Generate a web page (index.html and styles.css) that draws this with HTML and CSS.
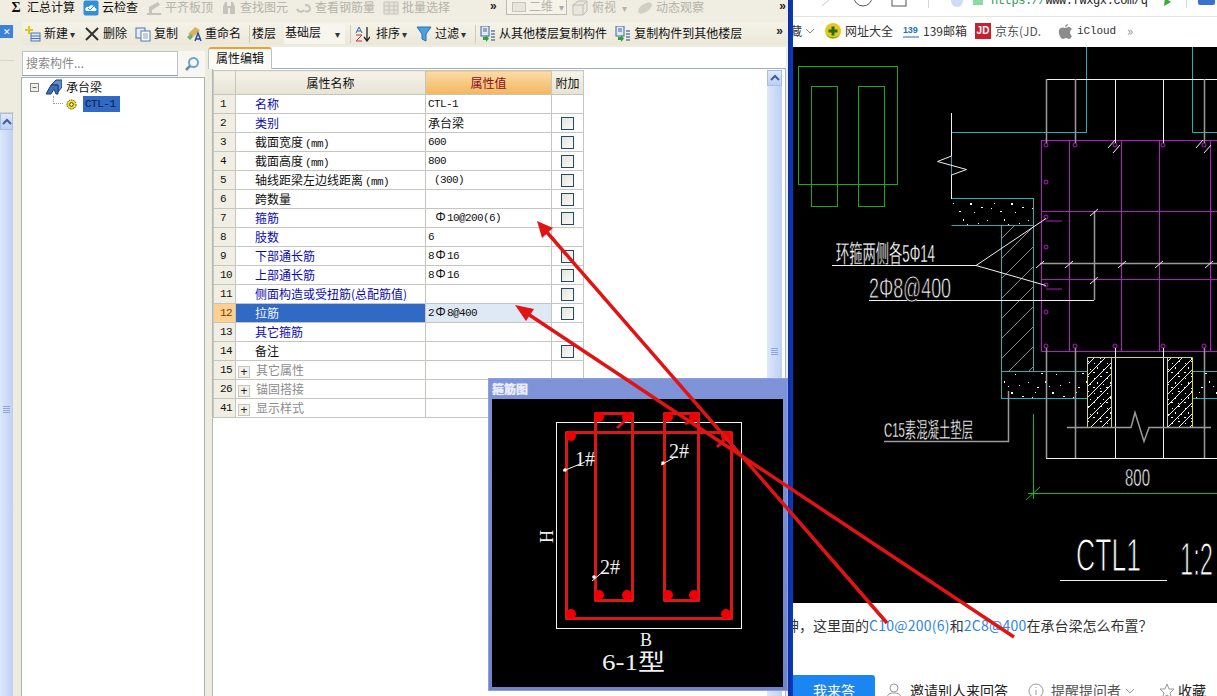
FILE: index.html
```html
<!DOCTYPE html>
<html lang="zh-CN">
<head>
<meta charset="utf-8">
<title>承台梁 属性编辑</title>
<link rel="stylesheet" href="styles.css">
</head>
<body>
<div class="screen">
  <section class="app">
    <div class="bar bar-top">
      <div class="tool"><span class="ico sigma">Σ</span><span>汇总计算</span></div>
      <div class="tool"><svg class="ico" viewBox="0 0 16 16"><rect x="0.5" y="0.5" width="15" height="15" rx="2" fill="#2f8fd8"/><path d="M3 11c-2-3 1-5 3-4 1-3 6-2 6 1 2 0 2 3 0 3z" fill="#fff"/><path d="M5 8l2 2 4-4" stroke="#2f8fd8" fill="none"/></svg><span>云检查</span></div>
      <div class="tool off"><svg class="ico" viewBox="0 0 16 16"><path d="M1 13h14v2H1zM3 7l9-5 2 3-8 5v3H3z" fill="#c4c4bc"/></svg><span>平齐板顶</span></div>
      <div class="tool off"><svg class="ico" viewBox="0 0 16 16"><path d="M2 7l2-5h2v4h4V2h2l2 5v7H9V8H7v6H2z" fill="#c4c4bc"/></svg><span>查找图元</span></div>
      <div class="tool off"><svg class="ico" viewBox="0 0 16 16"><path d="M1 9c2 4 6 3 7 1M9 5c3 0 5 1 5 4s-3 3-5 2" stroke="#c4c4bc" stroke-width="2" fill="none"/></svg><span>查看钢筋量</span></div>
      <div class="tool off"><svg class="ico" viewBox="0 0 16 16"><path d="M1 2h14v12H1zM1 6h14M1 10h14M6 2v12M11 2v12" stroke="#c4c4bc" fill="#e6e4da"/></svg><span>批量选择</span></div>
      <span class="more more-a">»</span>
      <div class="combo-off"><span class="combo-ico"></span><span>二维</span><span class="caret">▾</span></div>
      <div class="tool off tool-cube"><svg class="ico" viewBox="0 0 16 16"><path d="M1 5l5-4h9v10l-4 4H1zM1 5h10v10M11 5l4-4" stroke="#bdbdb4" fill="#e9e7dd"/></svg><span>俯视</span><span class="caret caret-off">▾</span></div>
      <div class="tool off tool-orbit"><svg class="ico" viewBox="0 0 16 16"><ellipse cx="8" cy="8" rx="8" ry="4" transform="rotate(-35 8 8)" fill="#cfcfc6"/></svg><span>动态观察</span></div>
      <span class="more more-b">»</span>
    </div>
    <div class="bar bar-sub">
      <div class="tool"><svg class="ico" viewBox="0 0 16 16"><path d="M3 0h2v3h3v2H5v3H3V5H0V3h3z" fill="#e8c020"/><rect x="6" y="7" width="9" height="8" fill="#dbe7f6" stroke="#4a78b0"/><path d="M6 10h9M6 12.500h9" stroke="#4a78b0"/></svg><span>新建</span><span class="caret">▾</span></div>
      <div class="tool"><svg class="ico" viewBox="0 0 16 16"><path d="M2 2l12 12M14 2L2 14" stroke="#333" stroke-width="2"/></svg><span>删除</span></div>
      <div class="tool"><svg class="ico" viewBox="0 0 16 16"><rect x="1" y="2" width="9" height="10" fill="#e6eefa" stroke="#4f79ac"/><rect x="6" y="5" width="9" height="10" fill="#fff" stroke="#4f79ac"/><path d="M8 8h5M8 10h5M8 12h5" stroke="#7fa0c8"/></svg><span>复制</span></div>
      <div class="tool"><svg class="ico" viewBox="0 0 16 16"><path d="M2 8l7-7 5 3-7 7z" fill="#d9b35c"/><path d="M1 11l4-3 2 3-3 3z" fill="#78a878"/><path d="M9 15l3-8 3 8M10 13h4" stroke="#2a4f9a" stroke-width="1.500" fill="none"/></svg><span>重命名</span></div>
      <span class="sep sep-a"></span>
      <span class="plain">楼层</span>
      <div class="combo"><span>基础层</span><span class="caret">▾</span></div>
      <span class="sep sep-b"></span>
      <div class="tool tool-wide"><svg class="ico" viewBox="0 0 16 16"><path d="M13 1v13M10 11l3 4 3-4" stroke="#222" fill="none" stroke-width="1.300"/><path d="M2 7l3-6 3 6M3 5h4" stroke="#3a6ab0" fill="none"/><path d="M2 9h6l-6 6h6" stroke="#b8324a" fill="none"/></svg><span>排序</span><span class="caret">▾</span></div>
      <div class="tool"><svg class="ico" viewBox="0 0 16 16"><path d="M1 1h14L10 8v7l-4-2V8z" fill="#4aa0e0" stroke="#2a70b0"/></svg><span>过滤</span><span class="caret">▾</span></div>
      <span class="sep sep-c"></span>
      <div class="tool"><svg class="ico" viewBox="0 0 16 16"><rect x="1" y="0" width="8" height="10" fill="#dfe9f7" stroke="#44659a"/><path d="M3 3h4M3 5h4" stroke="#44659a"/><path d="M11 5h4M11 8h4M11 11h4M11 14h4" stroke="#6080a8" stroke-width="1.500"/><path d="M3 11h3v-2l3 3.500L6 16v-2H3z" fill="#30a040"/></svg><span>从其他楼层复制构件</span></div>
      <div class="tool"><svg class="ico" viewBox="0 0 16 16"><rect x="1" y="0" width="8" height="10" fill="#dfe9f7" stroke="#44659a"/><path d="M3 3h4M3 5h4" stroke="#44659a"/><path d="M11 5h4M11 8h4M11 11h4M11 14h4" stroke="#6080a8" stroke-width="1.500"/><path d="M3 11h3v-2l3 3.500L6 16v-2H3z" fill="#30a040"/></svg><span>复制构件到其他楼层</span></div>
      <span class="more more-c">»</span>
    </div>
    <div class="work">
      <aside class="stub">
        <button class="stub-x">✕</button>
        <div class="stub-row"></div>
        <div class="stub-row stub-row-b"></div>
        <div class="stub-up"><svg viewBox="0 0 10 8" class="stub-chev"><path d="M1 6l4-4 4 4" stroke="#3d5f96" stroke-width="2" fill="none"/></svg></div>
        <div class="stub-track"><span class="grip"></span></div>
      </aside>
      <aside class="tree-panel">
        <div class="search"><span class="search-input">搜索构件...</span><span class="search-btn"><svg viewBox="0 0 16 16" class="search-ico"><circle cx="9.500" cy="6.500" r="4.500" fill="none" stroke="#69a7cf" stroke-width="2"/><path d="M6 10l-4 4" stroke="#5b8fb8" stroke-width="2.500"/></svg></span></div>
        <div class="tree">
          <div class="tree-row"><span class="expander">−</span><svg class="beam-ico" viewBox="0 0 16 16"><path d="M5 6l5-5h6v7l-4 5V6z" fill="#5b8fd0" stroke="#1c3c70"/><path d="M0 15l5-9h7v9h-2l-2-5-3 5z" fill="#3f6fb4" stroke="#1c3c70"/></svg><span>承台梁</span></div>
          <div class="tree-row tree-child"><span class="dots"></span><svg class="gear-ico" viewBox="0 0 12 12"><circle cx="6" cy="6" r="5" fill="#f0e020" stroke="#3a3a10" stroke-dasharray="1.500 1"/><circle cx="6" cy="6" r="2" fill="#fffbd0" stroke="#3a3a10"/></svg><span class="selected">CTL-1</span></div>
        </div>
      </aside>
      <main class="props">
        <div class="tab-strip"><div class="tab">属性编辑</div></div>
        <div class="sheet">
          <table class="grid">
            <colgroup><col class="c-no"><col class="c-name"><col class="c-val"><col class="c-add"></colgroup>
            <thead><tr><th class="no"></th><th>属性名称</th><th class="val-h">属性值</th><th>附加</th></tr></thead>
            <tbody>
              <tr><td class="no">1</td><td class="nm link">名称</td><td class="vl">CTL-1</td><td></td></tr>
              <tr><td class="no">2</td><td class="nm link">类别</td><td class="vl cjk">承台梁</td><td class="ck"><span class="box"></span></td></tr>
              <tr><td class="no">3</td><td class="nm">截面宽度<span class="unit">(mm)</span></td><td class="vl">600</td><td class="ck"><span class="box"></span></td></tr>
              <tr><td class="no">4</td><td class="nm">截面高度<span class="unit">(mm)</span></td><td class="vl">800</td><td class="ck"><span class="box"></span></td></tr>
              <tr><td class="no">5</td><td class="nm">轴线距梁左边线距离<span class="unit">(mm)</span></td><td class="vl">&nbsp;(300)</td><td class="ck"><span class="box"></span></td></tr>
              <tr><td class="no">6</td><td class="nm">跨数量</td><td class="vl"></td><td class="ck"><span class="box"></span></td></tr>
              <tr><td class="no">7</td><td class="nm link">箍筋</td><td class="vl">&nbsp;<span class="rb">Φ</span>10@200(6)</td><td class="ck"><span class="box"></span></td></tr>
              <tr><td class="no">8</td><td class="nm link">肢数</td><td class="vl">6</td><td></td></tr>
              <tr><td class="no">9</td><td class="nm link">下部通长筋</td><td class="vl">8<span class="rb">Φ</span>16</td><td class="ck"><span class="box"></span></td></tr>
              <tr><td class="no">10</td><td class="nm link">上部通长筋</td><td class="vl">8<span class="rb">Φ</span>16</td><td class="ck"><span class="box"></span></td></tr>
              <tr><td class="no">11</td><td class="nm link">侧面构造或受扭筋(总配筋值)</td><td class="vl"></td><td class="ck"><span class="box"></span></td></tr>
              <tr class="current"><td class="no">12</td><td class="nm">拉筋</td><td class="vl">2<span class="rb">Φ</span>8@400</td><td class="ck"><span class="box"></span></td></tr>
              <tr><td class="no">13</td><td class="nm link">其它箍筋</td><td class="vl"></td><td></td></tr>
              <tr><td class="no">14</td><td class="nm">备注</td><td class="vl"></td><td class="ck"><span class="box"></span></td></tr>
              <tr><td class="no">15</td><td class="nm group"><span class="plus">+</span>其它属性</td><td class="vl"></td><td></td></tr>
              <tr><td class="no">26</td><td class="nm group"><span class="plus">+</span>锚固搭接</td><td class="vl"></td><td></td></tr>
              <tr><td class="no">41</td><td class="nm group"><span class="plus">+</span>显示样式</td><td class="vl"></td><td></td></tr>
            </tbody>
          </table>
          <div class="vscroll"><div class="vs-up"><svg viewBox="0 0 10 8" class="stub-chev"><path d="M1 6l4-4 4 4" stroke="#3d5f96" stroke-width="2" fill="none"/></svg></div><div class="vs-track"><span class="grip grip-v"></span></div></div>
        </div>
      </main>
    </div>
  </section>
  <div class="divider"></div>
  <section class="browser">
    <div class="nav-row">
      <svg class="nav-svg" viewBox="793 0 424 16"><path d="M822 6l9-8" stroke="#c4c4c4" fill="none"/><circle cx="863" cy="-3" r="9" stroke="#555" fill="none"/><rect x="892" y="-6" width="14" height="12" stroke="#555" fill="none"/><path d="M928.500 0v8M1186.500 0v8" stroke="#d8d8d8"/><circle cx="957" cy="1" r="6" fill="#cfdcf5"/><rect x="973" y="-3" width="10" height="8" fill="#8fd8a8"/><text x="991" y="4" class="url"><tspan class="url-s">https://</tspan>www.fwxgx.com/q</text><path d="M1165 -2l6 4-7 4z" fill="#3aa83a"/><rect x="1198" y="-3" width="17" height="8" rx="2" fill="#3a70d0"/></svg>
    </div>
    <div class="bookmarks">
      <span class="bm-clip">藏</span>
      <svg class="bm-chev" viewBox="0 0 10 6"><path d="M1 1l4 4 4-4" stroke="#888" fill="none"/></svg>
      <div class="bm"><svg class="bm-ico" viewBox="0 0 16 16"><circle cx="8" cy="8" r="8" fill="#e8c820"/><path d="M1 11a8 8 0 0 0 14 0 9 9 0 0 1-14 0z" fill="#3c9a28"/><path d="M6.500 3.500h3v3h3v3h-3v3h-3v-3h-3v-3h3z" fill="#2a6a18"/></svg><span>网址大全</span></div>
      <div class="bm bm-mail"><span class="n139">139</span><span>139邮箱</span></div>
      <div class="bm bm-jd"><span class="jd">JD</span><span class="fade">京东(JD.</span></div>
      <div class="bm bm-apple"><svg class="bm-ico" viewBox="0 0 16 16"><path d="M11 1c0 2-2 3-3 3 0-2 2-3 3-3zM8 5c1 0 2-1 4-1 1 0 2 1 3 2-3 2-2 6 0 7-1 2-2 3-3 3s-2-1-3-1-2 1-3 1c-2 0-5-5-4-9 1-3 5-3 6-2z" fill="#8c8c8c"/></svg><span class="icloud">iCloud</span></div>
      <span class="bm-more">»</span>
    </div>
    <div class="drawing">
      <svg class="cad" viewBox="793 47 424 556">
        <defs>
          <pattern id="hatch" patternUnits="userSpaceOnUse" width="20" height="20"><path d="M0 20L20 0" class="c-grey"/></pattern>
          <pattern id="dense" patternUnits="userSpaceOnUse" width="11" height="11"><path d="M0 11L11 0" class="c-white"/></pattern>
          <pattern id="speck" patternUnits="userSpaceOnUse" width="41" height="27"><path d="M3 4h1v1H3zM12 9h2v1h-2zM20 3h1v2h-1zM27 14h2v2h-2zM35 7h1v1h-1zM7 19h1v1H7zM16 22h2v1h-2zM31 23h1v1h-1zM24 8h1v1h-1zM38 18h2v1h-2zM10 14h1v1h-1z" fill="#fff"/></pattern>
          <pattern id="speck-fine" patternUnits="userSpaceOnUse" width="13" height="15"><path d="M2 3h1v1H2zM8 1h2v1H8zM5 7h1v2H5zM11 9h1v1h-1zM1 12h2v1H1zM8 13h1v1H8z" fill="#fff"/></pattern>
        </defs>
        <g class="c-green"><rect x="798.500" y="66.500" width="99" height="118"/><rect x="811.500" y="86.500" width="26" height="120"/><rect x="858.500" y="86.500" width="26" height="120"/></g>
        <rect class="fill-hatch" x="1001" y="225" width="32" height="146"/>
        <rect class="fill-speck" x="951" y="198" width="82" height="27"/>
        <rect class="fill-speck" x="1001" y="371" width="86" height="27"/>
        <rect class="fill-speck" x="1192" y="371" width="25" height="27"/>
        <rect class="fill-dense" x="1087" y="357" width="24" height="70"/>
        <rect class="fill-fine" x="1087" y="357" width="24" height="70"/>
        <rect class="fill-dense" x="1167" y="357" width="25" height="70"/>
        <rect class="fill-fine" x="1167" y="357" width="25" height="70"/>
        <path class="c-cyan" d="M1086.500 47v85.500H951.500v66M1192.500 47v85.500H1217M951.500 198.500h82v27h-82M1001.500 225v173.500M1033.500 198v173M1001 371.500h86M1001 398.500h86M1192 371.500h25M1192 398.500h25"/>
        <path class="c-magenta" d="M1041.500 140.500H1217M1041.500 140v211.500H1217M1069.500 140v211M1121.500 140v211M1159.500 140v211M1210.500 140v211M1041 211.500h176M1041 279.500h176"/>
        <g class="c-magenta-dot"><circle cx="1046" cy="145" r="2"/><circle cx="1075" cy="145" r="2"/><circle cx="1115" cy="145" r="2"/><circle cx="1163" cy="145" r="2"/><circle cx="1204" cy="145" r="2"/><circle cx="1046" cy="182" r="2"/><circle cx="1046" cy="217" r="2"/><circle cx="1046" cy="247" r="2"/><circle cx="1046" cy="285" r="2"/><circle cx="1046" cy="312" r="2"/><circle cx="1046" cy="346" r="2"/><circle cx="1075" cy="346" r="2"/><circle cx="1115" cy="346" r="2"/><circle cx="1163" cy="346" r="2"/><circle cx="1204" cy="346" r="2"/></g>
        <path class="c-white" d="M1046.500 79.500H1217M1115.500 79v64M1163.500 79v64M1115.500 348v110M1163.500 348v110M1046 458.500h171M951.500 113v43l-14 5.500 29 8-15 5.500v24M832 265.500h144l70-47M976 265.500l70 20M869 300.500h225"/>
        <path class="c-grey-w" d="M1046.500 79v64M1075.500 79v64M1204.500 79v64M1046.500 348v110M1075.500 348v110M1204.500 348v110M1040 263.500h177M1094.500 211v89M884 441.500h124.500V391M1067 427.500h64l4-15 9 29 5-14h62"/>
        <path class="c-white" d="M1036 268l8-7M1065 268l8-7M1118 268l8-7M1155 268l8-7M1205 268l8-7M1090 216l8-7M1090 284l8-7M1108 148l7-8M1113 153l7-8M1196 148l7-8M1204 153l7-8"/>
        <path class="c-magenta" d="M1046 221h16M1046 289h16"/>
        <path class="c-yellow" d="M1087.500 427V357.500H1192.500V427M1111.500 357v70M1167.500 357v70"/>
        <path class="c-lime" d="M1033.500 414v85M1028 493.500h189M1026 500l14-13"/>
        <path class="c-white" d="M1060 580.500h107"/>
        <g class="cad-text">
          <text x="836" y="262" class="t22" textLength="99" lengthAdjust="spacingAndGlyphs">环箍两侧各5Φ14</text>
          <text x="869" y="298" class="t26" textLength="82" lengthAdjust="spacingAndGlyphs">2Φ8@400</text>
          <text x="884" y="437" class="t20" textLength="89" lengthAdjust="spacingAndGlyphs">C15素混凝土垫层</text>
          <text x="1125" y="486" class="t24" textLength="25" lengthAdjust="spacingAndGlyphs">800</text>
          <text x="1076" y="571" class="t44" textLength="65" lengthAdjust="spacingAndGlyphs">CTL1</text>
          <text x="1180" y="575" class="t44" textLength="33" lengthAdjust="spacingAndGlyphs">1:2</text>
        </g>
      </svg>
    </div>
    <p class="question">神，这里面的<span class="hl">C10@200(6)</span>和<span class="hl">2C8@400</span>在承台梁怎么布置？</p>
    <div class="actions">
      <button class="answer">我来答</button>
      <svg class="act-ico act-person" viewBox="0 0 16 16"><circle cx="8" cy="5" r="4" fill="none" stroke="#999"/><path d="M1 16c0-5 3-6 7-6s7 1 7 6" fill="none" stroke="#999"/></svg>
      <span class="act act-invite">邀请别人来回答</span>
      <svg class="act-ico act-info" viewBox="0 0 16 16"><circle cx="8" cy="8" r="7" fill="none" stroke="#999"/><path d="M8 4v1M8 7v5" stroke="#999"/></svg>
      <span class="act act-muted">提醒提问者</span>
      <svg class="act-ico act-chev" viewBox="0 0 10 6"><path d="M1 1l4 4 4-4" stroke="#999" fill="none"/></svg>
      <svg class="act-ico act-star" viewBox="0 0 16 16"><path d="M8 1l2 5h5l-4 4 1.500 5L8 12l-4.500 3L5 10 1 6h5z" fill="none" stroke="#999"/></svg>
      <span class="act">收藏</span>
    </div>
  </section>

  <div class="dialog">
    <div class="dialog-title">箍筋图</div>
    <svg class="dialog-body" viewBox="492 399 291 288">
      <rect class="d-white" x="556.500" y="422.500" width="185" height="206"/>
      <g class="d-red">
        <rect x="566.500" y="432.500" width="165" height="186"/>
        <rect x="595.500" y="413.500" width="37" height="187"/>
        <rect x="664.500" y="413.500" width="34" height="187"/>
        <path d="M631 415l-14 13M698 417l-13 7M731 433l-14 14"/>
      </g>
      <g class="d-dot">
        <circle cx="571" cy="436" r="5"/><circle cx="726" cy="436" r="5"/><circle cx="571" cy="614" r="5"/><circle cx="726" cy="614" r="5"/>
        <circle cx="599" cy="417" r="5"/><circle cx="627" cy="417" r="5"/><circle cx="599" cy="595" r="5"/><circle cx="627" cy="595" r="5"/>
        <circle cx="668" cy="417" r="5"/><circle cx="694" cy="417" r="5"/><circle cx="668" cy="595" r="5"/><circle cx="694" cy="595" r="5"/>
      </g>
      <path class="d-white" d="M563 471l22-9M661 465l14-8M592 581l13-11"/>
      <g class="d-pin"><circle cx="565" cy="470" r="1.800"/><circle cx="663" cy="463" r="1.800"/><circle cx="594" cy="577" r="1.800"/></g>
      <g class="d-text">
        <text x="575" y="466" class="d20">1#</text>
        <text x="669" y="458" class="d20">2#</text>
        <text x="600" y="574" class="d20">2#</text>
        <text x="640" y="646" class="d18">B</text>
        <text x="553" y="543" class="d18" transform="rotate(-90 553 543)">H</text>
        <text x="602" y="670" class="d27" textLength="63" lengthAdjust="spacingAndGlyphs">6-1型</text>
      </g>
    </svg>
  </div>

  <svg class="arrows" viewBox="0 0 1217 696">
    <path d="M887 623L545 230M1014 637L528 314"/>
    <polygon points="537,221 553,228 542,238"/>
    <polygon points="515,305 534,309 526,321"/>
  </svg>
</div>
</body>
</html>
```
FILE: styles.css
```css
* { box-sizing: border-box; }
html, body { margin: 0; padding: 0; width: 1217px; height: 696px; overflow: hidden; background: #fff; }
body { font: 12px/1.2 "Noto Sans CJK SC", "Liberation Sans", sans-serif; color: #111; }
button { font: inherit; border: 0; padding: 0; }

.screen { position: relative; display: flex; width: 1217px; height: 696px; overflow: hidden; }

/* Application window */
.app { width: 788px; height: 696px; display: flex; flex-direction: column; background: #eeebdf; overflow: hidden; }
.bar { display: flex; align-items: center; gap: 8px; white-space: nowrap; flex: none; }
.bar-top { height: 22px; padding: 0 0 7px 8px; background: #f0ede2; }
.bar-sub { height: 23px; margin-left: 22px; padding-left: 3px; background: linear-gradient(#f5f2e8, #ebe8da); border-radius: 3px 0 0 3px; }
.tool { display: flex; align-items: center; gap: 3px; }
.ico { width: 16px; height: 16px; flex: none; }
.sigma { font: bold 14px/16px "Liberation Serif", serif; text-align: center; }
.off { color: #b4b3a9; }
.caret { font-size: 10px; margin-left: -1px; width: 6px; color: #333; }
.caret-off { color: #b4b3a9; margin-left: 3px; }
.more { font: bold 12px/12px "Liberation Sans", sans-serif; color: #222; width: 8px; }
.more-a { margin-left: 32px; margin-top: -4px; }
.more-b { margin-left: 67px; margin-top: -4px; }
.more-c { margin-left: 26px; margin-top: -6px; }
.combo-off { display: flex; align-items: center; gap: 3px; width: 61px; height: 17px; align-self: flex-start; margin-top: -2px; padding-left: 5px; border: 1px solid #bdbcb2; color: #b4b3a9; background: #f4f2e9; }
.combo-off .caret { margin-left: 3px; color: #aaa; }
.combo-ico { width: 14px; height: 10px; border: 1px solid #c6c5bb; background: #e8e6dc; }
.tool-cube { margin-left: -3px; }
.tool-cube .ico { margin-right: 1px; }
.tool-orbit { margin-left: 1px; }
.sep { width: 1px; height: 18px; background: #cfccbd; flex: none; }
.sep-a { margin-right: -6px; }
.sep-b { margin-left: -3px; margin-right: -5px; }
.sep-c { margin-right: -4px; }
.plain { flex: none; }
.combo { display: flex; justify-content: space-between; align-items: center; width: 61px; height: 20px; padding: 0 4px 0 1px; background: #f7f5ee; }
.combo span:first-child { margin-top: -2px; }
.tool-wide .ico { margin-right: 3px; }

.work { flex: 1; min-height: 0; display: flex; }

/* Cut-off left pane */
.stub { width: 14px; flex: none; display: flex; flex-direction: column; margin-top: -20px; position: relative; }
.stub-x { width: 13px; height: 13px; background: #3b82d8; color: #fff; font-size: 9px; line-height: 13px; text-align: center; flex: none; }
.stub-row { height: 23px; border-bottom: 1px solid #d8d5c6; background: #eeebdf; flex: none; }
.stub-row-b { height: 52px; }
.stub-up { width: 13px; height: 17px; background: linear-gradient(#e0e9fb, #bccff2); border: 1px solid #a7bde6; display: flex; align-items: center; justify-content: center; flex: none; }
.stub-chev { width: 10px; height: 8px; }
.stub-track { flex: 1; width: 13px; background: linear-gradient(90deg, #dce7fb, #bed0f3); display: flex; align-items: center; justify-content: center; }
.grip { width: 7px; height: 7px; background: repeating-linear-gradient(#8ea8d8 0 1px, transparent 1px 2px); margin-top: -8px; }

/* Tree */
.tree-panel { width: 183px; flex: none; margin-left: 8px; display: flex; flex-direction: column; padding-top: 6px; }
.search { display: flex; height: 26px; flex: none; background: #f7f6f0; }
.search-input { width: 156px; height: 25px; line-height: 22px; padding-left: 3px; background: #fff; border: 1px solid #b9c4cc; border-bottom-color: #8fa0ae; color: #888; }
.search-btn { flex: 1; display: flex; align-items: center; justify-content: center; }
.search-ico { width: 16px; height: 16px; }
.tree { flex: 1; background: #fff; border: 1px solid #a8b2b8; border-bottom: 0; padding: 0 0 0 8px; margin-left: -1px; }
.tree-row { display: flex; align-items: center; height: 18px; font-size: 12px; }
.expander { width: 9px; height: 9px; border: 1px solid #888; background: #eee; font: 8px/7px "Liberation Sans", sans-serif; text-align: center; margin-right: 7px; }
.beam-ico { width: 16px; height: 16px; margin-right: 4px; }
.tree-child { height: 16px; padding-left: 23px; }
.dots { width: 10px; height: 8px; margin-top: -8px; border-left: 1px dotted #999; border-bottom: 1px dotted #999; margin-right: 3px; flex: none; }
.gear-ico { width: 11px; height: 11px; margin-right: 6px; flex: none; }
.selected { background: #316ac5; color: #0c1a40; font: 11px/16px "Liberation Mono", monospace; letter-spacing: -0.5px; width: 37px; height: 16px; padding-left: 2px; flex: none; }

/* Property sheet */
.props { width: 578px; flex: none; margin-left: 3px; display: flex; flex-direction: column; margin-top: 2px; }
.tab-strip { height: 22px; flex: none; background: #fff; border-bottom: 1px solid #9fb0bb; }
.tab { width: 64px; height: 22px; line-height: 18px; padding-left: 7px; background: #fbfbf6; border: 1px solid #b8c3c8; border-top: 2px solid #f0a030; border-bottom: 0; border-radius: 3px 3px 0 0; }
.sheet { flex: 1; min-height: 0; background: #fff; border-left: 1px solid #b0b8ba; border-right: 1px solid #b0b8ba; margin-left: 4px; padding: 1px 3px 0 0; display: flex; justify-content: space-between; }
.grid { border-collapse: collapse; table-layout: fixed; width: 370px; height: 347px; align-self: flex-start; }
.c-no { width: 22px; }
.c-name { width: 190px; }
.c-val { width: 126px; }
.c-add { width: 32px; }
.grid th, .grid td { border: 1px solid #c6c6c0; padding: 0; height: 19px; line-height: 16px; font-weight: normal; overflow: hidden; white-space: nowrap; }
.grid th { height: 24px; background: linear-gradient(#f6f3ea, #e7e3d4); text-align: center; }
.grid th.val-h { background: linear-gradient(#fbdba6, #f2b75f); color: #8a0d24; }
.grid td.no { background: #f1eee3; padding-left: 6px; font: 11px/16px "Liberation Mono", monospace; letter-spacing: -0.6px; }
.nm { padding-left: 19px !important; }
.link { color: #0b0bb0; }
.group { color: #8c8c8c; padding-left: 2px !important; }
.plus { display: inline-block; width: 12px; height: 12px; margin-right: 6px; border: 1px solid #c9c6b8; background: #f1f0ea; color: #222; font: 12px/10px "Liberation Sans", sans-serif; text-align: center; vertical-align: -1px; }
.unit { font: 11px/12px "Liberation Mono", monospace; letter-spacing: -0.6px; margin-left: 2px; }
.grid td.vl { padding-left: 2px; font: 11px/16px "Liberation Mono", "Noto Sans CJK SC", monospace; letter-spacing: -0.6px; }
.grid td.vl.cjk { font: 12px/16px "Noto Sans CJK SC", sans-serif; letter-spacing: 0; }
.rb { display: inline-block; width: 13px; height: 12px; text-align: center; font: 12px/12px "Noto Sans", sans-serif; letter-spacing: 0; vertical-align: baseline; }
.ck { text-align: center; }
.box { display: block; width: 13px; height: 13px; margin: 0 auto; border: 1px solid #25486e; background: linear-gradient(135deg, #e4e4dc, #fbfbf8); }
.current .no { background: #fdd08f !important; color: #7a3a00; }
.current .nm { background: #316ac5; color: #f2f4fa; }
.current .vl { background: #dfe8f5; }
.vscroll { width: 15px; height: 100%; flex: none; display: flex; flex-direction: column; }
.vs-up { height: 16px; background: linear-gradient(#e0e9fb, #bccff2); border: 1px solid #a7bde6; display: flex; align-items: center; justify-content: center; flex: none; }
.vs-track { flex: 1; background: linear-gradient(90deg, #dce7fb, #bed0f3); padding-top: 262px; display: flex; justify-content: center; align-items: flex-start; }
.grip-v { margin: 0; }

/* Divider between the two windows */
.divider { width: 5px; flex: none; background: linear-gradient(90deg, #0b2f9c, #0a3bc4); }

/* Browser */
.browser { width: 424px; flex: none; display: flex; flex-direction: column; background: #fff; overflow: hidden; }
.nav-row { height: 17px; flex: none; border-bottom: 1px solid #e4e4e4; }
.nav-svg { display: block; width: 424px; height: 16px; }
.url { font: 12px "Liberation Mono", monospace; fill: #222; letter-spacing: -0.4px; }
.url-s { fill: #2a9a5a; }
.bookmarks { height: 30px; flex: none; display: flex; align-items: center; white-space: nowrap; color: #333; padding-bottom: 2px; }
.bm-clip { width: 9px; overflow: hidden; direction: rtl; }
.bm-chev { width: 10px; height: 6px; margin-left: 3px; }
.bm { display: flex; align-items: center; gap: 4px; }
.bookmarks > .bm-chev + .bm { margin-left: 10px; }
.bm-ico { width: 16px; height: 16px; }
.bm-mail { margin-left: 10px; }
.n139 { width: 16px; font: bold 9px/12px "Liberation Sans", sans-serif; color: #2a70b8; border-bottom: 2px solid #8cb4dc; letter-spacing: -0.2px; }
.bm-jd { margin-left: 8px; }
.jd { width: 16px; height: 16px; background: #c8202f; color: #fff; font: bold 10px/16px "Liberation Sans", sans-serif; text-align: center; }
.fade { width: 50px; overflow: hidden; color: #555; }
.bm-apple { margin-left: 12px; gap: 2px; }
.icloud { font: 11px "Liberation Mono", monospace; letter-spacing: -0.1px; margin-left: 2px; }
.bm-more { margin-left: 11px; color: #999; font-size: 13px; }
.drawing { height: 556px; flex: none; background: #000; }
.cad { display: block; width: 424px; height: 556px; }
.c-green path, .c-green rect { fill: none; stroke: #1ea81e; }
.c-cyan { fill: none; stroke: #2ab0b4; }
.c-magenta { fill: none; stroke: #b818c8; }
.c-magenta-dot circle { fill: none; stroke: #b818c8; }
.c-white { fill: none; stroke: #f0f0f0; }
.c-grey { fill: none; stroke: #8a8a8a; }
.c-grey-w { fill: none; stroke: #9a9a9a; stroke-width: 1.500; }
.c-yellow { fill: none; stroke: #d8d83a; }
.c-lime { fill: none; stroke: #10c010; }
.fill-hatch { fill: url(#hatch); }
.fill-speck { fill: url(#speck); }
.fill-fine { fill: url(#speck-fine); }
.fill-dense { fill: url(#dense); }
.cad-text text { fill: #fff; stroke: #000; font-family: "Liberation Sans", "Noto Sans CJK SC", sans-serif; }
.t20 { font-size: 21px; stroke-width: 0.3; }
.t22 { font-size: 24px; stroke-width: 0.3; }
.t24 { font-size: 24px; stroke-width: 0.6; }
.t26 { font-size: 29px; stroke-width: 0.8; }
.t44 { font-size: 46px; stroke-width: 1.2; }
.question { margin: 0 0 0 -8px; height: 72px; flex: none; padding-top: 12px; font-size: 14px; line-height: 20px; color: #333; white-space: nowrap; }
.hl { color: #2f86e0; letter-spacing: 0.25px; }
.actions { display: flex; align-items: flex-start; flex: none; height: 21px; white-space: nowrap; font-size: 14px; }
.answer { width: 82px; height: 30px; background: #1b86f2; color: #fff; border-radius: 0 3px 0 0; font-size: 14px; line-height: 30px; text-align: center; flex: none; }
.act { line-height: 30px; color: #222; }
.act-muted { color: #555; }
.act-ico { flex: none; margin-top: 8px; width: 16px; height: 16px; }
.act-person { margin-left: 11px; margin-right: 8px; }
.act-info { margin-left: 20px; margin-right: 7px; }
.act-chev { width: 10px; height: 6px; margin: 13px 0 0 4px; }
.act-star { margin-left: 24px; margin-right: 3px; }

/* Floating dialog */
.dialog { position: absolute; left: 488px; top: 378px; width: 300px; height: 313px; padding: 0 4px 3px 3px; background: linear-gradient(#7e93d8, #6f84c8); border: 1px solid #8ea0dc; display: flex; flex-direction: column; }
.dialog-title { height: 20px; flex: none; color: #e9edfa; font-weight: bold; line-height: 20px; text-shadow: 0 0 1px #fff; }
.dialog-body { flex: 1; min-height: 0; width: 291px; height: 288px; background: #000; display: block; }
.d-white { fill: none; stroke: #f4f4f4; }
.d-red rect, .d-red path { fill: none; stroke: #d81818; stroke-width: 3; stroke-linejoin: round; }
.d-dot circle { fill: #f00000; }
.d-pin circle { fill: #fff; }
.d-text text { fill: #f0f0f0; font-family: "Liberation Serif", "Noto Sans CJK SC", serif; }
.d18 { font-size: 18px; }
.d20 { font-size: 20px; }
.d27 { font-size: 23px; }

/* Annotation arrows on top of everything */
.arrows { position: absolute; left: 0; top: 0; width: 1217px; height: 696px; pointer-events: none; }
.arrows path { stroke: #e01414; stroke-width: 3.500; fill: none; }
.arrows polygon { fill: #e01414; }
```
